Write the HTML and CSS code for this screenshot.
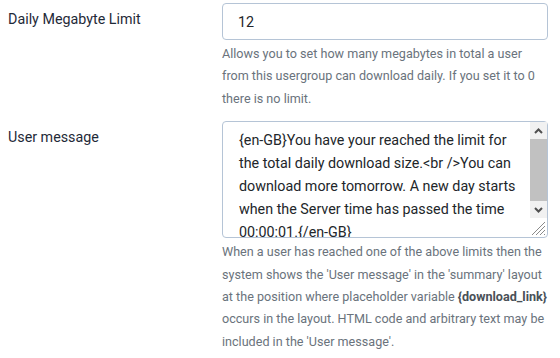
FILE: index.html
```html
<!DOCTYPE html>
<html lang="en">
<head>
    <meta charset="UTF-8">
    <title>Usergroup limits</title>
    <link rel="stylesheet" href="styles.css">
</head>
<body>
    <div class="control-group">
        <label class="control-label" for="dailyMb">Daily Megabyte Limit</label>
        <div class="controls">
            <input class="form-control" type="text" id="dailyMb" value="12">
            <div class="form-text">Allows you to set how many megabytes in total a user from this usergroup can download daily. If you set it to 0 there is no limit.</div>
        </div>
    </div>
    <div class="control-group">
        <label class="control-label" for="userMsg">User message</label>
        <div class="controls">
            <div class="textarea-wrap">
                <textarea class="form-control message" id="userMsg">{en-GB}You have your reached the limit for the total daily download size.&lt;br /&gt;You can download more tomorrow. A new day starts when the Server time has passed the time 00:00:01.{/en-GB}</textarea>
                <!-- scrollbar + resize grip drawn by hand -->
                <div class="scrollbar">
                    <div class="sb-button">
                        <svg width="9" height="6" viewBox="0 0 9 6"><path d="M1 5 L4.5 1.5 L8 5" fill="none" stroke="#505050" stroke-width="2"/></svg>
                    </div>
                    <div class="sb-thumb"></div>
                    <div class="sb-button">
                        <svg width="9" height="6" viewBox="0 0 9 6"><path d="M1 1 L4.5 4.5 L8 1" fill="none" stroke="#505050" stroke-width="2"/></svg>
                    </div>
                    <div class="sb-corner">
                        <svg width="15" height="15" viewBox="0 0 15 15">
                            <path d="M14 1 L1 14 M14 5 L5 14 M14 9 L9 14 M14 13 L13 14" stroke="#8a8a8a" stroke-width="1"/>
                        </svg>
                    </div>
                </div>
            </div>
            <div class="form-text">When a user has reached one of the above limits then the system shows the 'User message' in the 'summary' layout at the position where placeholder variable <strong>{download_link}</strong> occurs in the layout. HTML code and arbitrary text may be included in the 'User message'.</div>
        </div>
    </div>
</body>
</html>
```

FILE: styles.css
```css
body {
    font-family: Roboto, "Liberation Sans", sans-serif;
    background-color: #fff;
    color: #22262a;
    margin: 0;
    padding: 3px 12px 0 8px;
}

.control-group {
    display: grid;
    grid-template-columns: 214px 326px;
    margin-bottom: 11px;
}

.control-label {
    font-size: 14.3px;
    line-height: 23px;
    padding-top: 5px;
    color: #1f2a38;
}

.form-control {
    display: block;
    box-sizing: border-box;
    width: 100%;
    margin: 0;
    font-family: inherit;
    font-size: 14.3px;
    color: #22262a;
    background: #fff;
    border: 1px solid #b5c4d6;
    border-radius: 4px;
}

input.form-control {
    height: 37px;
    padding: 0 15px;
}

.textarea-wrap {
    position: relative;
}

.message {
    height: 117px;
    padding: 7px 30px 4px 16px;
    line-height: 23px;
    resize: none;
    overflow: hidden;
}

.scrollbar {
    position: absolute;
    top: 1px;
    right: 1px;
    bottom: 1px;
    width: 17px;
    display: flex;
    flex-direction: column;
}

.sb-button {
    height: 17px;
    background: #f1f1f1;
    display: flex;
    align-items: center;
    justify-content: center;
}

.sb-thumb {
    height: 62px;
    background: #c1c1c1;
}

.sb-corner {
    flex: 1;
    display: flex;
    align-items: flex-end;
    justify-content: flex-end;
    padding: 0 1px 1px 0;
}

.sb-corner svg {
    display: block;
}

.form-text {
    margin-top: 3px;
    font-size: 12.6px;
    line-height: 22.4px;
    color: #6a737c;
}

.form-text strong {
    color: #495057;
}
```
